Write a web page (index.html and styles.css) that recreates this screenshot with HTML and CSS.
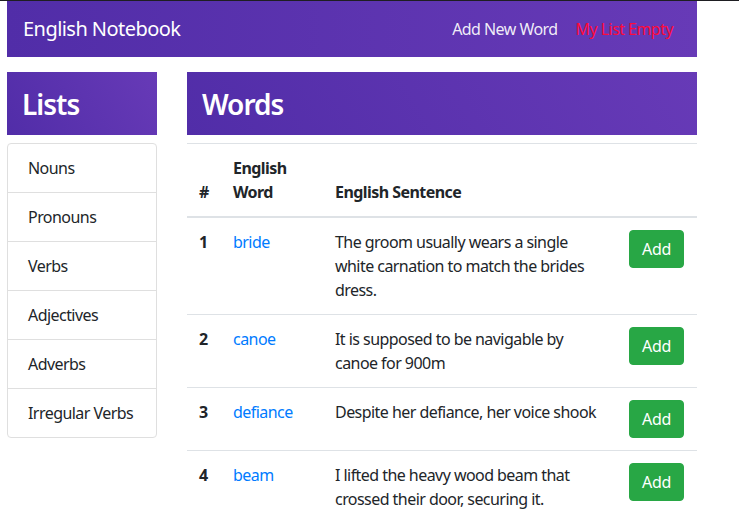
FILE: index.html
```html
<!DOCTYPE html>
<html>
<head>
<meta charset="utf-8">
<link rel="stylesheet" href="styles.css">
</head>
<body>
<div class="page">
  <nav class="navbar">
    <span class="brand">English Notebook</span>
    <div class="nav-links">
      <a class="nav-link">Add New Word</a>
      <a class="nav-link empty">My List Empty</a>
    </div>
  </nav>
  <div class="main">
    <aside class="sidebar">
      <h2 class="panel-title">Lists</h2>
      <ul class="list-group">
        <li class="list-item">Nouns</li>
        <li class="list-item">Pronouns</li>
        <li class="list-item">Verbs</li>
        <li class="list-item">Adjectives</li>
        <li class="list-item">Adverbs</li>
        <li class="list-item">Irregular Verbs</li>
      </ul>
    </aside>
    <section class="content">
      <h2 class="panel-title">Words</h2>
      <table class="table">
        <thead>
          <tr>
            <th class="c-num">#</th>
            <th class="c-word">English Word</th>
            <th class="c-sent">English Sentence</th>
            <th class="c-btn"></th>
          </tr>
        </thead>
        <tbody>
          <tr>
            <th>1</th>
            <td><a class="word">bride</a></td>
            <td>The groom usually wears a single white carnation to match the brides dress.</td>
            <td><button class="btn">Add</button></td>
          </tr>
          <tr>
            <th>2</th>
            <td><a class="word">canoe</a></td>
            <td>It is supposed to be navigable by canoe for 900m</td>
            <td><button class="btn">Add</button></td>
          </tr>
          <tr>
            <th>3</th>
            <td><a class="word">defiance</a></td>
            <td>Despite her defiance, her voice shook</td>
            <td><button class="btn">Add</button></td>
          </tr>
          <tr>
            <th>4</th>
            <td><a class="word">beam</a></td>
            <td>I lifted the heavy wood beam that crossed their door, securing it.</td>
            <td><button class="btn">Add</button></td>
          </tr>
        </tbody>
      </table>
    </section>
  </div>
</div>
</body>
</html>
```

FILE: styles.css
```css
* { box-sizing: border-box; }
html, body { margin: 0; padding: 0; }
body {
  border-top: 1px solid #1e1e22;
  font-family: "Noto Sans", "Open Sans", sans-serif;
  font-size: 16px;
  line-height: 1.5;
  letter-spacing: -0.55px;
  color: #212529;
  background: #fff;
  overflow: hidden;
}
.page {
  width: 690px;
  margin-left: 7px;
}
.navbar {
  height: 56px;
  display: flex;
  align-items: center;
  justify-content: space-between;
  padding: 0 16px;
  background: linear-gradient(to right, #512da8, #673ab7);
}
.brand {
  color: #fff;
  font-size: 20px;
}
.nav-links { display: flex; }
.nav-link {
  color: rgba(255,255,255,0.92);
  padding: 0 8px;
  margin-left: 2px;
}
.nav-link.empty { color: #ff0a3a; }
.main {
  display: flex;
  gap: 30px;
  margin-top: 15px;
}
.sidebar { width: 150px; flex: none; }
.content { flex: 1; }
.panel-title {
  margin: 0 0 8px;
  height: 63px;
  display: flex;
  align-items: center;
  padding: 0 15px;
  color: #fff;
  font-size: 28px;
  font-weight: 600;
  letter-spacing: -1px;
  background: linear-gradient(60deg, #512da8, #673ab7);
}
.list-group {
  list-style: none;
  margin: 0;
  padding: 0;
  border: 1px solid #dfdfdf;
  border-radius: 4px;
}
.list-item {
  padding: 12px 20px;
  border-top: 1px solid #dfdfdf;
  white-space: nowrap;
}
.list-item:first-child { border-top: none; }
.table {
  width: 100%;
  border-collapse: collapse;
}
.table th, .table td {
  padding: 12px;
  text-align: left;
  vertical-align: top;
  border-top: 1px solid #dee2e6;
}
.table thead th {
  vertical-align: bottom;
  border-bottom: 2px solid #dee2e6;
  font-weight: 700;
}
.c-num { width: 34px; }
.c-word { width: 102px; }
.c-sent { width: 294px; }
.table tbody th { font-weight: 700; }
.word { color: #007bff; }
.btn {
  font-family: inherit;
  font-size: 16px;
  line-height: 24px;
  letter-spacing: -0.3px;
  padding: 6px 12px;
  border: 1px solid #28a745;
  border-radius: 4px;
  background: #28a745;
  color: #fff;
}
```
